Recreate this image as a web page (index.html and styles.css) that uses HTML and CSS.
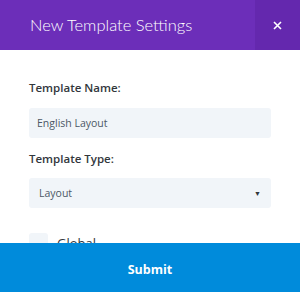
FILE: index.html
```html
<!DOCTYPE html>
<html lang="en">
<head>
    <meta charset="UTF-8">
    <title>New Template Settings</title>
    <link rel="stylesheet" href="styles.css">
</head>
<body>
<div class="modal">
    <div class="modal-header">
        <h1 class="modal-title">New Template Settings</h1>
        <button class="close-btn" aria-label="Close">
            <svg width="9" height="9" viewBox="0 0 9 9"><path d="M1 1L8 8M8 1L1 8" stroke="#fff" stroke-width="1.6"/></svg>
        </button>
    </div>
    <div class="modal-body">
        <label class="field-label">Template Name:</label>
        <input type="text" class="field-input" value="English Layout">
        <label class="field-label second">Template Type:</label>
        <div class="field-select">
            <span>Layout</span>
            <span class="arrow">&#9660;</span>
        </div>
        <div class="check-row">
            <span class="checkbox"></span>
            <span class="check-text">Global</span>
        </div>
    </div>
    <button class="submit-btn">Submit</button>
</div>
</body>
</html>
```

FILE: styles.css
```css
* {
    box-sizing: border-box;
}
body {
    margin: 0;
    font-family: "Open Sans", "Noto Sans", sans-serif;
    background: #fff;
}
.modal {
    width: 300px;
    height: 292px;
    display: flex;
    flex-direction: column;
    overflow: hidden;
}
.modal-header {
    height: 50px;
    flex: none;
    display: flex;
    background: #6c2eb9;
}
.modal-title {
    flex: 1;
    margin: 0;
    padding-left: 30px;
    font-family: Lato, sans-serif;
    font-size: 16.5px;
    font-weight: 300;
    line-height: 50px;
    color: #fff;
}
.close-btn {
    width: 45px;
    height: 50px;
    border: none;
    padding: 0;
    background: #6428ae;
    display: flex;
    align-items: center;
    justify-content: center;
}
.modal-body {
    flex: 1;
    overflow: hidden;
    padding: 30px 29px 0;
}
.field-label {
    display: block;
    font-size: 11.5px;
    font-weight: 600;
    line-height: 16px;
    color: #32373c;
    margin-bottom: 12px;
}
.field-label.second {
    margin-top: 13px;
    margin-bottom: 11px;
}
.field-input,
.field-select {
    display: flex;
    align-items: center;
    width: 242px;
    height: 30px;
    border: none;
    border-radius: 3px;
    background: #f1f5f9;
    padding: 0 8px;
    font-family: inherit;
    font-size: 10.5px;
    color: #4c5866;
}
.field-select {
    justify-content: space-between;
    padding: 0 10px;
}
.arrow {
    font-size: 7px;
    color: #32373c;
}
.check-row {
    display: flex;
    align-items: flex-start;
    margin-top: 25px;
}
.checkbox {
    width: 19px;
    height: 18px;
    border-radius: 3px;
    background: #f1f5f9;
}
.check-text {
    margin-left: 9px;
    margin-top: 2px;
    font-size: 13px;
    line-height: 16px;
    color: #32373c;
}
.submit-btn {
    flex: none;
    height: 49px;
    border: none;
    padding-top: 4px;
    background: #008bdb;
    color: #fff;
    font-family: inherit;
    font-size: 12.5px;
    font-weight: 700;
}
```
